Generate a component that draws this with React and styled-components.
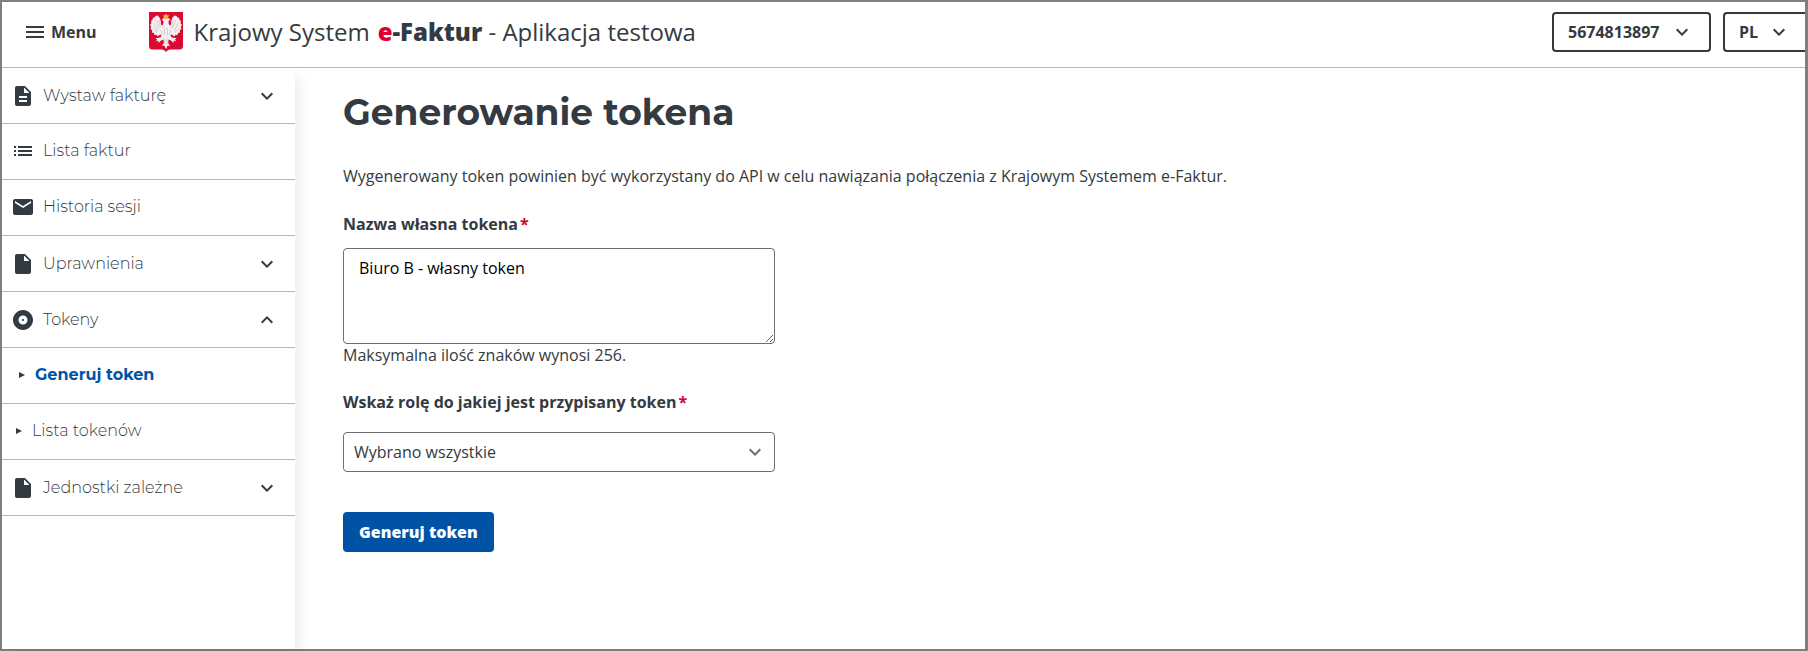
import React from "react";
import styled, { createGlobalStyle, css } from "styled-components";
import {
  MdAlbum,
  MdDescription,
  MdInsertDriveFile,
  MdKeyboardArrowDown,
  MdKeyboardArrowUp,
  MdList,
  MdMail,
  MdMenu,
} from "react-icons/md";

const ink = "#343a41";
const line = "#b4b5b6";
const blue = "#0052a5";
const red = "#dc0032";
const bodyFont = '"Open Sans", "Noto Sans", sans-serif';
const headingFont = 'Montserrat, Inter, "Open Sans", sans-serif';

const GlobalStyle = createGlobalStyle`
  *, *::before, *::after { box-sizing: border-box; }
  body {
    margin: 0;
    background: #fff;
    color: ${ink};
    font-family: ${bodyFont};
    font-size: 16px;
    line-height: 24px;
  }
`;

const Page = styled.div`
  display: flex;
  flex-direction: column;
  min-height: 100vh;
  border: 2px solid #807e7e;
  border-right-width: 3px;
`;

const Header = styled.header`
  display: flex;
  align-items: center;
  height: 66px;
  padding: 0 0 6px 21px;
  border-bottom: 1px solid ${line};
`;

const MenuButton = styled.button`
  display: flex;
  align-items: center;
  gap: 4px;
  padding: 0;
  border: 0;
  background: none;
  color: ${ink};
  font: 700 16px/24px ${bodyFont};
`;

const Brand = styled.a`
  display: flex;
  align-items: center;
  gap: 11px;
  margin: 0 auto 0 52px;
  color: ${ink};
  font-size: 24px;
  line-height: 32px;
  text-decoration: none;
  white-space: nowrap;
`;

const BrandName = styled.span`
  font-weight: 500;
`;

const BrandStrong = styled.strong`
  margin-left: 8px;
  font-weight: 800;
`;

const BrandAccent = styled.span`
  color: ${red};
`;

const HeaderTools = styled.div`
  display: flex;
  gap: 12px;
`;

const SelectWrap = styled.div`
  position: relative;
  width: ${(p) => p.$width};

  svg {
    position: absolute;
    top: 8px;
    right: ${(p) => p.$iconRight};
    pointer-events: none;
    color: ${(p) => p.$iconColor || ink};
  }
`;

const selectBase = css`
  display: block;
  width: 100%;
  height: 40px;
  appearance: none;
  background: #fff;
  color: ${ink};
  border-radius: 4px;
`;

const HeaderSelect = styled.select`
  ${selectBase}
  padding: 0 0 0 14px;
  border: 2px solid ${ink};
  font: 700 16px/24px ${bodyFont};
  ${(p) => p.$flush && "border-right: 0; border-radius: 4px 0 0 4px;"}
`;

const RoleSelect = styled.select`
  ${selectBase}
  padding: 0 10px;
  border: 1px solid #6c6e70;
  font: 400 16px/24px ${bodyFont};
`;

const Body = styled.div`
  display: flex;
  flex: 1;
`;

const Sidebar = styled.nav`
  width: 293px;
  flex: none;
  box-shadow: 6px 8px 10px rgba(0, 0, 0, 0.06);
`;

const NavList = styled.ul`
  margin: 0;
  padding: 0;
  list-style: none;
`;

const NavLink = styled.a`
  display: flex;
  align-items: center;
  gap: 8px;
  height: 56px;
  padding: 0 16px ${(p) => (p.$group ? "0" : "2px")} ${(p) => (p.$sub ? (p.$active ? "17px" : "14px") : "9px")};
  border-bottom: 1px solid ${line};
  color: ${(p) => (p.$active ? blue : ink)};
  font: ${(p) => (p.$active ? 700 : 300)} 16px/24px ${headingFont};
  text-decoration: none;

  svg {
    flex: none;
    color: ${ink};
  }
`;

const NavText = styled.span`
  flex: 1;
`;

const Main = styled.main`
  flex: 1;
  min-width: 0;
  padding: 20px 48px 40px;
`;

const Title = styled.h1`
  margin: 0 0 28px;
  font: 700 36px/48px ${headingFont};
`;

const Lead = styled.p`
  margin: 0 0 24px;
`;

const Form = styled.form`
  max-width: 432px;
`;

const Label = styled.label`
  display: block;
  margin-bottom: ${(p) => p.$gap};
  font-weight: 700;
`;

const Required = styled.span`
  margin-left: 2px;
  color: ${red};
`;

const TextArea = styled.textarea`
  display: block;
  width: 100%;
  height: 96px;
  padding: 7px 15px;
  border: 1px solid #6c6e70;
  border-radius: 4px;
  color: #000;
  font: 400 16px/24px ${bodyFont};
`;

const Hint = styled.p`
  margin: 0 0 24px;
  line-height: 22px;
`;

const Submit = styled.button`
  height: 40px;
  margin-top: 40px;
  padding: 0 16px;
  border: 0;
  border-radius: 4px;
  background: ${blue};
  color: #fff;
  font: 800 16px/24px ${bodyFont};
`;

const EmblemHalf = () => (
  <>
    <path
      d="M17 6.500L14.500 6 12.500 8 14.200 8.500 14.500 11 13.500 13.500 12 12.500 11.800 9 10.500 5.500 8.500 3.500 6.500 4 5.500 5.500 3.800 6 3.500 8 2 9 2.500 11 1 13 2.200 14.800 1.500 17 3.200 18.300 3 20.500 5 21 5.300 23 7.500 22.800 8.500 24.500 10.500 23 12.500 22.500 11.800 25 9 26 6.500 26 8 27.500 6.800 29.500 9.300 28.500 9.500 31 12 28.500 14.500 27.500 14.800 31 13 34 15.300 33.500 17 37z"
      fill="#f4f0f2"
    />
    <path
      d="M10 8l1.500 7M7.500 8l2.500 8.500M5 11l3.500 8M4 15.500l4 5M15.500 16v7M12 18l1.500 4M15.800 27v5"
      stroke="#cdc3ca"
      strokeWidth=".8"
      fill="none"
    />
  </>
);

const Emblem = () => (
  <svg width="34" height="40" viewBox="0 0 34 40" aria-hidden="true">
    <path d="M0 0h34v34q0 3.500-3.500 3.500H21q-2.500 0-4 2.500q-1.500-2.500-4-2.500H3.500Q0 37.500 0 34z" fill="#dc0a32" />
    <EmblemHalf />
    <g transform="translate(34 0) scale(-1 1)">
      <EmblemHalf />
    </g>
    <path d="M14.200 2.500l1.500 1L17 1.500l1.300 2 1.500-1-.7 4h-4.200z" fill="#f5b82e" />
  </svg>
);

const Caret = () => (
  <svg width="8" height="8" viewBox="0 0 8 8" aria-hidden="true">
    <path d="M0 1l6 3-6 3z" fill="currentColor" />
  </svg>
);

const navItems = [
  { text: "Wystaw fakturę", icon: MdDescription, arrow: MdKeyboardArrowDown },
  { text: "Lista faktur", icon: MdList },
  { text: "Historia sesji", icon: MdMail },
  { text: "Uprawnienia", icon: MdInsertDriveFile, arrow: MdKeyboardArrowDown },
  { text: "Tokeny", icon: MdAlbum, arrow: MdKeyboardArrowUp },
  { text: "Generuj token", icon: Caret, sub: true, active: true },
  { text: "Lista tokenów", icon: Caret, sub: true },
  { text: "Jednostki zależne", icon: MdInsertDriveFile, arrow: MdKeyboardArrowDown },
];

const NavItem = ({ text, icon: Icon, arrow: Arrow, sub, active }) => (
  <li>
    <NavLink href="#" $group={Boolean(Arrow)} $sub={sub} $active={active} aria-current={active ? "page" : undefined}>
      <Icon size={24} />
      <NavText>{text}</NavText>
      {Arrow && <Arrow size={24} />}
    </NavLink>
  </li>
);

export default function App() {
  return (
    <>
      <GlobalStyle />
      <Page>
        <Header>
          <MenuButton type="button">
            <MdMenu size={24} />
            Menu
          </MenuButton>
          <Brand href="#">
            <Emblem />
            <span>
              <BrandName>Krajowy System</BrandName>
              <BrandStrong>
                <BrandAccent>e</BrandAccent>-Faktur
              </BrandStrong>{" "}
              - Aplikacja testowa
            </span>
          </Brand>
          <HeaderTools>
            <SelectWrap $width="159px" $iconRight="17px">
              <HeaderSelect aria-label="NIP">
                <option>5674813897</option>
              </HeaderSelect>
              <MdKeyboardArrowDown size={24} />
            </SelectWrap>
            <SelectWrap $width="82px" $iconRight="14px">
              <HeaderSelect aria-label="Język" $flush>
                <option>PL</option>
              </HeaderSelect>
              <MdKeyboardArrowDown size={24} />
            </SelectWrap>
          </HeaderTools>
        </Header>
        <Body>
          <Sidebar aria-label="Menu">
            <NavList>
              {navItems.map((item) => (
                <NavItem key={item.text} {...item} />
              ))}
            </NavList>
          </Sidebar>
          <Main>
            <Title>Generowanie tokena</Title>
            <Lead>
              Wygenerowany token powinien być wykorzystany do API w celu nawiązania połączenia z Krajowym Systemem
              e-Faktur.
            </Lead>
            <Form>
              <Label htmlFor="token-name" $gap="12px">
                Nazwa własna tokena<Required>*</Required>
              </Label>
              <TextArea id="token-name" defaultValue="Biuro B - własny token" maxLength={256} />
              <Hint>Maksymalna ilość znaków wynosi 256.</Hint>
              <Label htmlFor="token-role" $gap="18px">
                Wskaż rolę do jakiej jest przypisany token<Required>*</Required>
              </Label>
              <SelectWrap $width="100%" $iconRight="8px" $iconColor="#6c6e70">
                <RoleSelect id="token-role">
                  <option>Wybrano wszystkie</option>
                </RoleSelect>
                <MdKeyboardArrowDown size={24} />
              </SelectWrap>
              <Submit type="button">Generuj token</Submit>
            </Form>
          </Main>
        </Body>
      </Page>
    </>
  );
}
